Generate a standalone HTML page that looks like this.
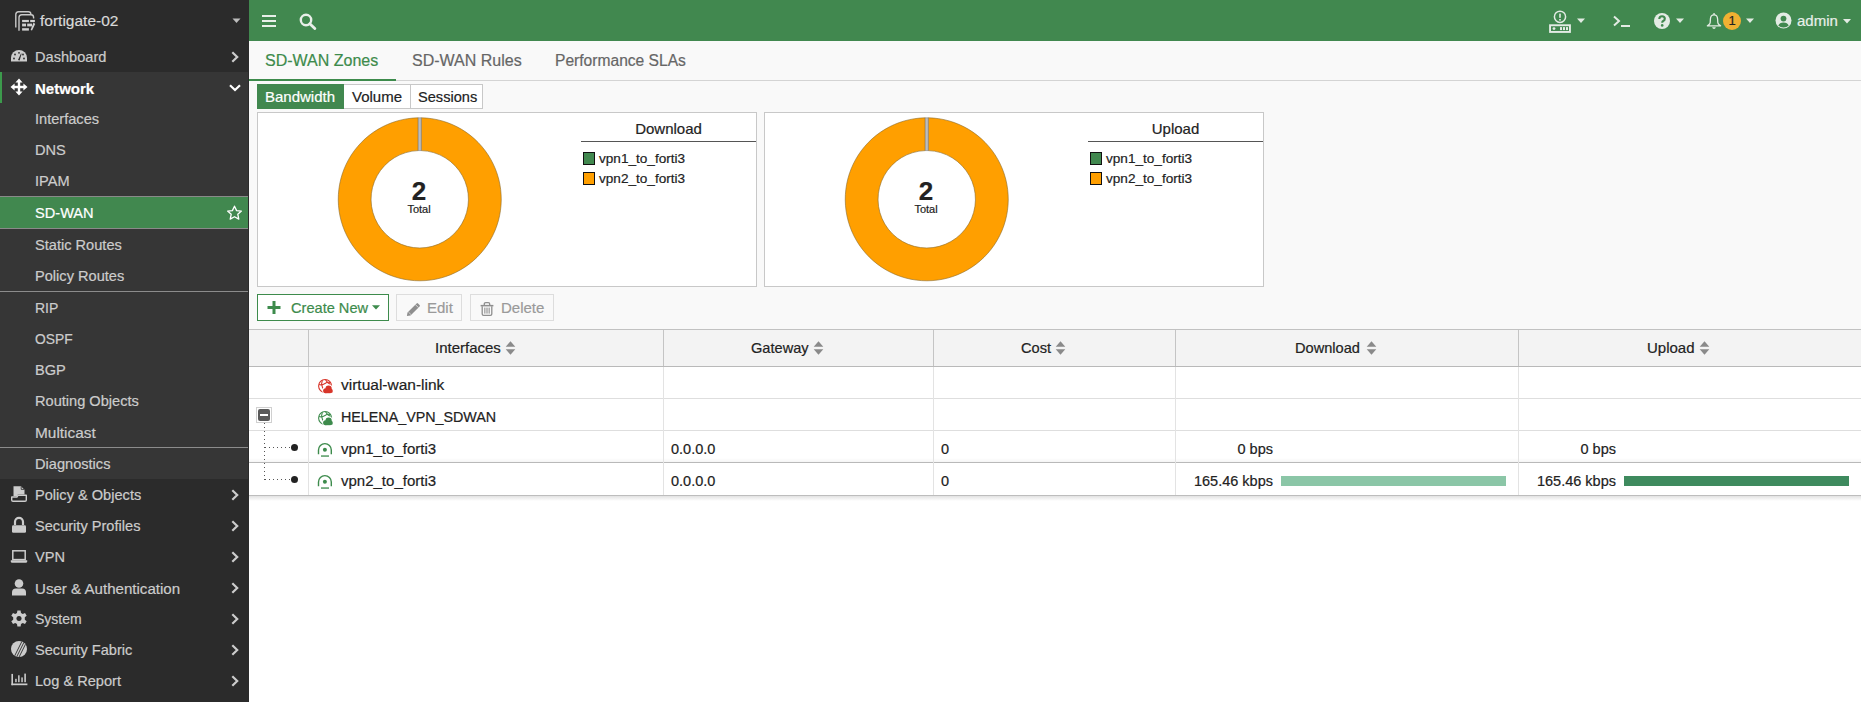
<!DOCTYPE html>
<html><head><meta charset="utf-8">
<style>
*{box-sizing:border-box;margin:0;padding:0}
html,body{width:1861px;height:702px;overflow:hidden;background:#fff;font-family:"Liberation Sans",sans-serif;-webkit-font-smoothing:antialiased;}
.t,.si .l{-webkit-text-stroke:0.2px currentColor}
.a{position:absolute}
.t{position:absolute;white-space:nowrap;}
#side{position:absolute;left:0;top:0;width:249px;height:702px;background:#2b2b2b;overflow:hidden}
.si{position:absolute;left:0;width:248px;height:31px;color:#cccccc;font-size:14.6px;}
.si .l{position:absolute;left:35px;top:1px;line-height:31px;white-space:nowrap}
.si svg.ic{position:absolute;left:10px;top:6px}
.si svg.ch{position:absolute;left:231px;top:10px}
#hdr{position:absolute;left:249px;top:0;width:1612px;height:41px;background:#41884f;}
</style></head>
<body>
<div id="side">
  <div class="a" style="left:0;top:72px;width:248px;height:407px;background:#363636"></div>
  <div class="a" style="left:0;top:72px;width:2px;height:31px;background:#3c9a4c"></div>
  <!-- separators -->
  <div class="a" style="left:0;top:291px;width:248px;height:1px;background:#8c8c8c"></div>
  <div class="a" style="left:0;top:447px;width:248px;height:1px;background:#8c8c8c"></div>
  <!-- SD-WAN selected -->
  <div class="a" style="left:0;top:196px;width:248px;height:33px;background:#41884f;border-top:1px solid #8a8a8a;border-bottom:1px solid #8a8a8a"></div>

  <!-- top device -->
  <svg class="a" style="left:14px;top:10px" width="22" height="22" viewBox="0 0 22 22">
    <g fill="none" stroke="#c8c8c8" stroke-width="1.4">
      <path d="M1.8 17.5 V4.6 Q1.8 1.8 4.6 1.8 H14.4 Q16.8 1.8 16.9 4.3"/>
      <path d="M5 20.8 V7.6 Q5 4.8 7.8 4.8 H17 Q19.6 4.8 19.6 7.5 V8.6"/>
    </g>
    <g fill="#d0d0d0">
      <rect x="8.1" y="9.9" width="6.8" height="2.2"/><rect x="16.2" y="9.9" width="4.7" height="2.2"/>
      <rect x="8.1" y="13.6" width="3.9" height="2.8"/><rect x="13.2" y="13.6" width="4.8" height="2.8"/>
      <rect x="8.1" y="18.2" width="6.8" height="2.4"/>
      <path d="M19.5 12.6 L21.2 14 L18 20.6 L16.6 20 Z"/>
    </g>
  </svg>
  <div class="t" style="left:40px;top:11px;font-size:15.5px;color:#d9d9d9;line-height:20px">fortigate-02</div>
  <svg class="a" style="left:232px;top:18px" width="9" height="6" viewBox="0 0 9 6"><path d="M0.5 0.5 H8.5 L4.5 5 Z" fill="#bdbdbd"/></svg>

  <!-- Dashboard -->
  <div class="si" style="top:41px">
    <svg class="ic" style="left:10px;top:8px" width="18" height="14" viewBox="0 0 18 14"><path d="M9 1 A8 8 0 0 0 1 9 V12.5 H17 V9 A8 8 0 0 0 9 1 Z" fill="#cccccc"/><g fill="#2b2b2b"><circle cx="4" cy="9.5" r="0.9"/><circle cx="5" cy="5.5" r="0.9"/><circle cx="9" cy="3.8" r="0.9"/><circle cx="14" cy="9.5" r="0.9"/><circle cx="13" cy="5.5" r="0.9"/><path d="M8 11 L11 4.5 L11.6 4.8 L9.6 11.5 Z"/></g></svg>
    <span class="l">Dashboard</span>
    <svg class="ch" width="8" height="12" viewBox="0 0 8 12"><path d="M1.3 1.3 L6.2 6 L1.3 10.7" fill="none" stroke="#cccccc" stroke-width="2.2"/></svg>
  </div>
  <!-- Network -->
  <div class="si" style="top:72px;color:#fff;font-weight:bold;font-size:15px">
    <svg class="ic" style="left:10px;top:6px" width="18" height="18" viewBox="0 0 18 18"><path fill="#fff" d="M9 0.5 L12.6 4.6 H10.2 V7.8 H13.4 V5.4 L17.5 9 L13.4 12.6 V10.2 H10.2 V13.4 H12.6 L9 17.5 L5.4 13.4 H7.8 V10.2 H4.6 V12.6 L0.5 9 L4.6 5.4 V7.8 H7.8 V4.6 H5.4 Z"/></svg>
    <span class="l">Network</span>
    <svg class="a" style="left:229px;top:12px" width="12" height="8" viewBox="0 0 12 8"><path d="M1 1.2 L6 6 L11 1.2" fill="none" stroke="#ffffff" stroke-width="2.2"/></svg>
  </div>
  <div class="si" style="top:103px"><span class="l">Interfaces</span></div>
  <div class="si" style="top:134px"><span class="l">DNS</span></div>
  <div class="si" style="top:165px"><span class="l">IPAM</span></div>
  <div class="si" style="top:197px;color:#fff"><span class="l">SD-WAN</span>
    <svg class="a" style="left:226px;top:8px" width="17" height="16" viewBox="0 0 17 16"><path d="M8.5 1.2 L10.6 5.6 L15.4 6.1 L11.8 9.3 L12.8 14.1 L8.5 11.7 L4.2 14.1 L5.2 9.3 L1.6 6.1 L6.4 5.6 Z" fill="none" stroke="#fff" stroke-width="1.3" stroke-linejoin="round"/></svg>
  </div>
  <div class="si" style="top:229px"><span class="l">Static Routes</span></div>
  <div class="si" style="top:260px"><span class="l">Policy Routes</span></div>
  <div class="si" style="top:292px"><span class="l" style="font-size:14px">RIP</span></div>
  <div class="si" style="top:323px"><span class="l" style="font-size:13.8px">OSPF</span></div>
  <div class="si" style="top:354px"><span class="l">BGP</span></div>
  <div class="si" style="top:385px"><span class="l">Routing Objects</span></div>
  <div class="si" style="top:416px"><span class="l" style="font-size:15.4px">Multicast</span></div>
  <div class="si" style="top:448px"><span class="l">Diagnostics</span></div>

  <div class="si" style="top:479px">
    <svg class="ic" style="left:10px;top:6px" width="18" height="18" viewBox="0 0 18 18"><path d="M3.5 1.2 H11 L14.5 4.7 V9.4 H7.9 L6.7 11.3 H3.5 Z" fill="#cccccc"/><path d="M11.2 1.6 V4.4 H14" fill="none" stroke="#2b2b2b" stroke-width="0.8"/><path d="M1.7 12 H6.9 L8.1 10.2 H16.3 V15 Q16.3 16.3 15 16.3 H3 Q1.7 16.3 1.7 15 Z" fill="none" stroke="#cccccc" stroke-width="1.4" stroke-linejoin="round"/></svg>
    <span class="l">Policy &amp; Objects</span>
    <svg class="ch" width="8" height="12" viewBox="0 0 8 12"><path d="M1.3 1.3 L6.2 6 L1.3 10.7" fill="none" stroke="#cccccc" stroke-width="2.2"/></svg>
  </div>
  <div class="si" style="top:510px">
    <svg class="ic" style="left:11px;top:6px" width="16" height="17" viewBox="0 0 16 17"><path d="M4 9 V5.8 A4 4 0 0 1 12 5.8 V9" fill="none" stroke="#cccccc" stroke-width="2.2"/><rect x="1" y="9.2" width="14" height="7.6" rx="1.3" fill="#cccccc"/></svg>
    <span class="l">Security Profiles</span>
    <svg class="ch" width="8" height="12" viewBox="0 0 8 12"><path d="M1.3 1.3 L6.2 6 L1.3 10.7" fill="none" stroke="#cccccc" stroke-width="2.2"/></svg>
  </div>
  <div class="si" style="top:541px">
    <svg class="ic" style="left:10px;top:8px" width="18" height="15" viewBox="0 0 18 15"><rect x="2.8" y="1.8" width="12.4" height="8.8" fill="none" stroke="#cccccc" stroke-width="1.5"/><path d="M0.8 11.2 H17.2 V12.5 Q17.2 13.8 15.8 13.8 H2.2 Q0.8 13.8 0.8 12.5 Z" fill="#cccccc"/></svg>
    <span class="l">VPN</span>
    <svg class="ch" width="8" height="12" viewBox="0 0 8 12"><path d="M1.3 1.3 L6.2 6 L1.3 10.7" fill="none" stroke="#cccccc" stroke-width="2.2"/></svg>
  </div>
  <div class="si" style="top:572px">
    <svg class="ic" style="left:11px;top:7px" width="16" height="17" viewBox="0 0 16 17"><circle cx="8" cy="4.5" r="4.3" fill="#cccccc"/><path d="M1 16.5 V13.5 Q1 9.5 5 9.5 H11 Q15 9.5 15 13.5 V16.5 Z" fill="#cccccc"/></svg>
    <span class="l" style="font-size:15.1px">User &amp; Authentication</span>
    <svg class="ch" width="8" height="12" viewBox="0 0 8 12"><path d="M1.3 1.3 L6.2 6 L1.3 10.7" fill="none" stroke="#cccccc" stroke-width="2.2"/></svg>
  </div>
  <div class="si" style="top:603px">
    <svg class="ic" style="left:11px;top:7px" width="16" height="17" viewBox="0 0 16 17"><g transform="translate(8 8.5)"><path fill="#cccccc" fill-rule="evenodd" d="M-1.6 -8 H1.6 L2 -5.6 L3.8 -4.6 L6 -5.6 L7.7 -2.8 L5.8 -1.2 V1.2 L7.7 2.8 L6 5.6 L3.8 4.6 L2 5.6 L1.6 8 H-1.6 L-2 5.6 L-3.8 4.6 L-6 5.6 L-7.7 2.8 L-5.8 1.2 V-1.2 L-7.7 -2.8 L-6 -5.6 L-3.8 -4.6 L-2 -5.6 Z M0 -2.6 A2.6 2.6 0 1 0 0.01 -2.6 Z"/></g></svg>
    <span class="l" style="font-size:14px">System</span>
    <svg class="ch" width="8" height="12" viewBox="0 0 8 12"><path d="M1.3 1.3 L6.2 6 L1.3 10.7" fill="none" stroke="#cccccc" stroke-width="2.2"/></svg>
  </div>
  <div class="si" style="top:634px">
    <svg class="ic" style="left:10px;top:6px" width="18" height="18" viewBox="0 0 18 18"><defs><clipPath id="cp"><circle cx="9" cy="9" r="8"/></clipPath></defs><circle cx="9" cy="9" r="8" fill="#cccccc"/><g clip-path="url(#cp)" stroke="#2b2b2b" stroke-width="0.9"><path d="M3.6 18 L12.6 0"/><path d="M6.1 18 L15.1 0"/><path d="M8.6 18 L17.6 0"/></g></svg>
    <span class="l">Security Fabric</span>
    <svg class="ch" width="8" height="12" viewBox="0 0 8 12"><path d="M1.3 1.3 L6.2 6 L1.3 10.7" fill="none" stroke="#cccccc" stroke-width="2.2"/></svg>
  </div>
  <div class="si" style="top:665px">
    <svg class="ic" style="left:10px;top:7px" width="18" height="17" viewBox="0 0 18 17"><g fill="#cccccc"><rect x="1.4" y="1.9" width="1.6" height="11.3"/><rect x="1.4" y="11.5" width="16" height="1.7"/><rect x="5.2" y="6.8" width="1.5" height="3.4"/><rect x="8.1" y="3.3" width="1.5" height="6.9"/><rect x="11.3" y="5.4" width="1.5" height="4.8"/><rect x="14.3" y="1.6" width="1.6" height="8.6"/></g></svg>
    <span class="l">Log &amp; Report</span>
    <svg class="ch" width="8" height="12" viewBox="0 0 8 12"><path d="M1.3 1.3 L6.2 6 L1.3 10.7" fill="none" stroke="#cccccc" stroke-width="2.2"/></svg>
  </div>
</div>

<div id="hdr"></div>

<!-- header icons -->
<svg class="a" style="left:261px;top:14px" width="16" height="13" viewBox="0 0 16 13"><g fill="#e8efe9"><rect x="1" y="1" width="14" height="2"/><rect x="1" y="6" width="14" height="2"/><rect x="1" y="11" width="14" height="2"/></g></svg>
<svg class="a" style="left:299px;top:13px" width="18" height="17" viewBox="0 0 18 17"><circle cx="7" cy="7" r="5.2" fill="none" stroke="#e8efe9" stroke-width="2.4"/><path d="M10.8 10.8 L15.8 15.6" stroke="#e8efe9" stroke-width="2.8" stroke-linecap="round"/></svg>

<svg class="a" style="left:1548px;top:10px" width="25" height="24" viewBox="0 0 25 24"><g fill="none" stroke="#e3ebe4" stroke-width="1.5"><circle cx="12" cy="6.8" r="5.6"/><rect x="2.05" y="15.25" width="19.9" height="6.7" stroke-width="1.9"/></g><g fill="#e3ebe4"><rect x="11.2" y="3.6" width="1.6" height="4.2"/><rect x="11.2" y="9" width="1.6" height="1.6"/><circle cx="6" cy="18.6" r="1.4"/><rect x="12" y="17.1" width="2" height="3"/><rect x="15" y="17.1" width="2" height="3"/><rect x="18" y="17.1" width="2" height="3"/></g></svg>
<svg class="a" style="left:1577px;top:18px" width="8" height="6" viewBox="0 0 8 6"><path d="M0 0.5 H8 L4 5 Z" fill="#e3ebe4"/></svg>
<svg class="a" style="left:1613px;top:15px" width="18" height="13" viewBox="0 0 18 13"><path d="M1 1.5 L6 6 L1 10.5" fill="none" stroke="#e3ebe4" stroke-width="2"/><rect x="8" y="10" width="9" height="2" fill="#e3ebe4"/></svg>
<svg class="a" style="left:1653px;top:12px" width="18" height="18" viewBox="0 0 18 18"><circle cx="9" cy="9" r="8" fill="#e3ebe4"/><path d="M6.3 7 Q6.3 4.2 9 4.2 Q11.8 4.2 11.8 6.8 Q11.8 8.3 10.2 9 Q9.2 9.5 9.2 10.8" fill="none" stroke="#41884f" stroke-width="2.1"/><circle cx="9.2" cy="13.4" r="1.3" fill="#41884f"/></svg>
<svg class="a" style="left:1676px;top:18px" width="8" height="6" viewBox="0 0 8 6"><path d="M0 0.5 H8 L4 5 Z" fill="#e3ebe4"/></svg>
<svg class="a" style="left:1706px;top:12px" width="16" height="18" viewBox="0 0 16 18"><rect x="7.3" y="1.1" width="1.5" height="1.8" fill="#e3ebe4"/><path d="M8 2.9 Q4.6 2.9 4.4 7 L4.2 10.5 Q4.1 12 2.4 13.1 L1.4 13.8 H14.6 L13.6 13.1 Q11.9 12 11.8 10.5 L11.6 7 Q11.4 2.9 8 2.9 Z" fill="none" stroke="#e3ebe4" stroke-width="1.3" stroke-linejoin="round"/><path d="M6.1 15.3 H9.9 Q9.4 16.9 8 16.9 Q6.6 16.9 6.1 15.3 Z" fill="#e3ebe4"/></svg>
<div class="a" style="left:1723px;top:12px;width:18px;height:18px;border-radius:50%;background:#f0b132"></div>
<div class="t" style="left:1723px;top:12px;width:18px;line-height:18px;text-align:center;font-size:13px;color:#222">1</div>
<svg class="a" style="left:1746px;top:18px" width="8" height="6" viewBox="0 0 8 6"><path d="M0 0.5 H8 L4 5 Z" fill="#e3ebe4"/></svg>
<svg class="a" style="left:1775px;top:12px" width="17" height="17" viewBox="0 0 17 17"><circle cx="8.5" cy="8.5" r="8" fill="#e3ebe4"/><circle cx="8.5" cy="6.6" r="2.9" fill="#41884f"/><path d="M3.3 13.6 Q4.5 10.6 8.5 10.6 Q12.5 10.6 13.7 13.6 Q11.8 15.6 8.5 15.6 Q5.2 15.6 3.3 13.6 Z" fill="#41884f"/></svg>
<div class="t" style="left:1797px;top:11px;font-size:15px;line-height:20px;color:#e8efe9">admin</div>
<svg class="a" style="left:1843px;top:19px" width="8" height="5" viewBox="0 0 8 5"><path d="M0 0 H8 L4 4.5 Z" fill="#e3ebe4"/></svg>

<!-- content bg -->
<div class="a" style="left:249px;top:41px;width:1612px;height:288px;background:#f9f9f9"></div>
<!-- tabs -->
<div class="a" style="left:249px;top:80px;width:1612px;height:1px;background:#d4d4d4"></div>
<div class="a" style="left:249px;top:79px;width:147px;height:2px;background:#3d8b4c"></div>
<div class="t" style="left:265px;top:51px;font-size:16px;line-height:20px;color:#3d8b4c">SD-WAN Zones</div>
<div class="t" style="left:412px;top:51px;font-size:16px;line-height:20px;color:#666">SD-WAN Rules</div>
<div class="t" style="left:555px;top:51px;font-size:15.6px;line-height:20px;color:#666">Performance SLAs</div>

<!-- segmented buttons -->
<div class="a" style="left:257px;top:84px;width:226px;height:25px;background:#fff;border:1px solid #c8c8c8"></div>
<div class="a" style="left:257px;top:84px;width:87px;height:25px;background:#41884f"></div>
<div class="a" style="left:410px;top:84px;width:1px;height:25px;background:#c8c8c8"></div>
<div class="t" style="left:265px;top:87px;font-size:15px;line-height:20px;color:#fff">Bandwidth</div>
<div class="t" style="left:352px;top:87px;font-size:15px;line-height:20px;color:#222">Volume</div>
<div class="t" style="left:418px;top:87px;font-size:14.6px;line-height:20px;color:#222">Sessions</div>

<!-- chart panels -->
<div class="a" style="left:257px;top:112px;width:500px;height:175px;background:#fff;border:1px solid #c8c8c8"></div>
<div class="a" style="left:764px;top:112px;width:500px;height:175px;background:#fff;border:1px solid #c8c8c8"></div>

<svg class="a" style="left:257px;top:112px" width="500" height="175" viewBox="0 0 500 175">
  <g transform="translate(162.75 87.3)">
    <path d="M1.5 -81.5 A81.5 81.5 0 1 1 -1.5 -81.5 L-1.5 -48.7 A48.7 48.7 0 1 0 1.5 -48.7 Z" fill="#ff9f00" stroke="#8a6a2a" stroke-width="0.6"/>
    <path d="M-1.5 -81.5 L1.5 -81.5 L1.5 -48.7 L-1.5 -48.7 Z" fill="#bdbdbd" stroke="#777" stroke-width="0.5"/>
  </g>
</svg>
<svg class="a" style="left:764px;top:112px" width="500" height="175" viewBox="0 0 500 175">
  <g transform="translate(162.75 87.3)">
    <path d="M1.5 -81.5 A81.5 81.5 0 1 1 -1.5 -81.5 L-1.5 -48.7 A48.7 48.7 0 1 0 1.5 -48.7 Z" fill="#ff9f00" stroke="#8a6a2a" stroke-width="0.6"/>
    <path d="M-1.5 -81.5 L1.5 -81.5 L1.5 -48.7 L-1.5 -48.7 Z" fill="#bdbdbd" stroke="#777" stroke-width="0.5"/>
  </g>
</svg>
<div class="t" style="left:369px;top:176px;width:100px;text-align:center;font-size:26px;font-weight:bold;line-height:30px;color:#222">2</div>
<div class="t" style="left:369px;top:203px;width:100px;text-align:center;font-size:11px;line-height:13px;color:#222">Total</div>
<div class="t" style="left:876px;top:176px;width:100px;text-align:center;font-size:26px;font-weight:bold;line-height:30px;color:#222">2</div>
<div class="t" style="left:876px;top:203px;width:100px;text-align:center;font-size:11px;line-height:13px;color:#222">Total</div>

<!-- legends -->
<div class="t" style="left:581px;top:119px;width:175px;text-align:center;font-size:15px;line-height:20px;color:#222">Download</div>
<div class="a" style="left:581px;top:141px;width:175px;height:1px;background:#555"></div>
<div class="a" style="left:583px;top:152px;width:12px;height:13px;background:#41884f;border:1px solid #111"></div>
<div class="a" style="left:583px;top:172px;width:12px;height:13px;background:#ff9f00;border:1px solid #111"></div>
<div class="t" style="left:599px;top:150px;font-size:13.6px;line-height:18px;color:#222">vpn1_to_forti3</div>
<div class="t" style="left:599px;top:170px;font-size:13.6px;line-height:18px;color:#222">vpn2_to_forti3</div>

<div class="t" style="left:1088px;top:119px;width:175px;text-align:center;font-size:15px;line-height:20px;color:#222">Upload</div>
<div class="a" style="left:1088px;top:141px;width:175px;height:1px;background:#555"></div>
<div class="a" style="left:1090px;top:152px;width:12px;height:13px;background:#41884f;border:1px solid #111"></div>
<div class="a" style="left:1090px;top:172px;width:12px;height:13px;background:#ff9f00;border:1px solid #111"></div>
<div class="t" style="left:1106px;top:150px;font-size:13.6px;line-height:18px;color:#222">vpn1_to_forti3</div>
<div class="t" style="left:1106px;top:170px;font-size:13.6px;line-height:18px;color:#222">vpn2_to_forti3</div>

<!-- toolbar -->
<div class="a" style="left:257px;top:294px;width:132px;height:27px;background:#fff;border:1px solid #3d8b4c"></div>
<svg class="a" style="left:267px;top:301px" width="14" height="13" viewBox="0 0 14 13"><path d="M5.5 0 H8.5 V5 H13.5 V8 H8.5 V13 H5.5 V8 H0.5 V5 H5.5 Z" fill="#3d8b4c"/></svg>
<div class="t" style="left:291px;top:298px;font-size:14.6px;line-height:20px;color:#3d8b4c">Create New</div>
<svg class="a" style="left:372px;top:305px" width="8" height="5" viewBox="0 0 8 5"><path d="M0 0.3 H8 L4 4.5 Z" fill="#3d8b4c"/></svg>

<div class="a" style="left:396px;top:294px;width:66px;height:27px;background:#f9f9f9;border:1px solid #dddddd"></div>
<svg class="a" style="left:406px;top:302px" width="15" height="15" viewBox="0 0 15 15"><path d="M0.9 14.1 L1.5 10.5 L10.6 1.4 Q11.3 0.7 12 1.4 L13.6 3 Q14.3 3.7 13.6 4.4 L4.5 13.5 Z" fill="#8e8e8e"/><path d="M9.4 2.6 L12.4 5.6" stroke="#f9f9f9" stroke-width="0.7"/><path d="M2.4 10 L5 12.6" stroke="#f9f9f9" stroke-width="0.6"/></svg>
<div class="t" style="left:427px;top:298px;font-size:15px;line-height:20px;color:#9a9a9a">Edit</div>

<div class="a" style="left:470px;top:294px;width:84px;height:27px;background:#f9f9f9;border:1px solid #dddddd"></div>
<svg class="a" style="left:480px;top:301px" width="14" height="16" viewBox="0 0 14 16"><g fill="none" stroke="#8e8e8e" stroke-width="1.3"><path d="M4.3 4 V3 Q4.3 1.7 5.7 1.7 H8.3 Q9.7 1.7 9.7 3 V4"/><path d="M2.2 5.2 V12.9 Q2.2 14.3 3.6 14.3 H10.4 Q11.8 14.3 11.8 12.9 V5.2"/></g><rect x="0.6" y="3.9" width="12.8" height="1.5" fill="#8e8e8e"/><g fill="#8e8e8e"><rect x="4.3" y="6.6" width="1.1" height="6"/><rect x="6.45" y="6.6" width="1.1" height="6"/><rect x="8.6" y="6.6" width="1.1" height="6"/></g></svg>
<div class="t" style="left:501px;top:298px;font-size:15px;line-height:20px;color:#9a9a9a">Delete</div>

<!-- table -->
<div class="a" style="left:249px;top:329px;width:1612px;height:38px;background:#f3f3f3;border-top:1px solid #c2c2c2;border-bottom:1px solid #b9b9b9"></div>
<div class="a" style="left:249px;top:367px;width:1612px;height:128px;background:#fff"></div>
<div class="a" style="left:249px;top:398px;width:1612px;height:1px;background:#dedede"></div>
<div class="a" style="left:249px;top:430px;width:1612px;height:1px;background:#dedede"></div>
<div class="a" style="left:249px;top:462px;width:1612px;height:1px;background:#b9b9b9"></div>
<div class="a" style="left:249px;top:495px;width:1612px;height:1px;background:#bdbdbd"></div>
<div class="a" style="left:249px;top:496px;width:1612px;height:5px;background:linear-gradient(#e2e2e2,#fff)"></div>
<div class="a" style="left:249px;top:458px;width:1612px;height:4px;background:linear-gradient(rgba(0,0,0,0),rgba(0,0,0,0.04))"></div>

<!-- column dividers -->
<div class="a" style="left:308px;top:330px;width:1px;height:36px;background:#c4c4c4"></div>
<div class="a" style="left:663px;top:330px;width:1px;height:36px;background:#c4c4c4"></div>
<div class="a" style="left:933px;top:330px;width:1px;height:36px;background:#c4c4c4"></div>
<div class="a" style="left:1175px;top:330px;width:1px;height:36px;background:#c4c4c4"></div>
<div class="a" style="left:1518px;top:330px;width:1px;height:36px;background:#c4c4c4"></div>
<div class="a" style="left:308px;top:367px;width:1px;height:128px;background:#e3e3e3"></div>
<div class="a" style="left:663px;top:367px;width:1px;height:128px;background:#e3e3e3"></div>
<div class="a" style="left:933px;top:367px;width:1px;height:128px;background:#e3e3e3"></div>
<div class="a" style="left:1175px;top:367px;width:1px;height:128px;background:#e3e3e3"></div>
<div class="a" style="left:1518px;top:367px;width:1px;height:128px;background:#e3e3e3"></div>

<!-- header labels -->
<div class="t" style="left:435px;top:338px;font-size:15px;line-height:20px;color:#222">Interfaces</div>
<div class="t" style="left:751px;top:338px;font-size:14.6px;line-height:20px;color:#222">Gateway</div>
<div class="t" style="left:1021px;top:338px;font-size:14.6px;line-height:20px;color:#222">Cost</div>
<div class="t" style="left:1295px;top:338px;font-size:14.6px;line-height:20px;color:#222">Download</div>
<div class="t" style="left:1647px;top:338px;font-size:15px;line-height:20px;color:#222">Upload</div>
<svg class="a" style="left:505px;top:341px" width="11" height="14" viewBox="0 0 11 14"><path d="M5.5 0.3 L10.3 5.7 H0.7 Z M5.5 13.7 L10.3 8.3 H0.7 Z" fill="#8a8a8a"/></svg>
<svg class="a" style="left:813px;top:341px" width="11" height="14" viewBox="0 0 11 14"><path d="M5.5 0.3 L10.3 5.7 H0.7 Z M5.5 13.7 L10.3 8.3 H0.7 Z" fill="#8a8a8a"/></svg>
<svg class="a" style="left:1055px;top:341px" width="11" height="14" viewBox="0 0 11 14"><path d="M5.5 0.3 L10.3 5.7 H0.7 Z M5.5 13.7 L10.3 8.3 H0.7 Z" fill="#8a8a8a"/></svg>
<svg class="a" style="left:1366px;top:341px" width="11" height="14" viewBox="0 0 11 14"><path d="M5.5 0.3 L10.3 5.7 H0.7 Z M5.5 13.7 L10.3 8.3 H0.7 Z" fill="#8a8a8a"/></svg>
<svg class="a" style="left:1699px;top:341px" width="11" height="14" viewBox="0 0 11 14"><path d="M5.5 0.3 L10.3 5.7 H0.7 Z M5.5 13.7 L10.3 8.3 H0.7 Z" fill="#8a8a8a"/></svg>

<!-- tree -->
<div class="a" style="left:256px;top:407px;width:16px;height:16px;border:1px solid #d0d0d0;background:#fff"></div>
<div class="a" style="left:258px;top:409px;width:12px;height:12px;border-radius:2px;background:#5a5a5a"></div>
<div class="a" style="left:260px;top:414px;width:8px;height:2px;background:#fff"></div>
<div class="a" style="left:264px;top:423px;width:1px;height:57px;background:repeating-linear-gradient(180deg,#555 0 1.5px,transparent 1.5px 4px)"></div>
<div class="a" style="left:265px;top:447px;width:27px;height:1px;background:repeating-linear-gradient(90deg,#555 0 1.5px,transparent 1.5px 4px)"></div>
<div class="a" style="left:265px;top:479px;width:27px;height:1px;background:repeating-linear-gradient(90deg,#555 0 1.5px,transparent 1.5px 4px)"></div>
<div class="a" style="left:291px;top:444px;width:7px;height:7px;border-radius:50%;background:#222"></div>
<div class="a" style="left:291px;top:476px;width:7px;height:7px;border-radius:50%;background:#222"></div>

<!-- row icons -->
<svg class="a" style="left:317px;top:378px" width="16" height="16" viewBox="0 0 16 16"><g fill="none" stroke="#d8352a" stroke-width="1.1"><circle cx="8.1" cy="8" r="6.5"/><path d="M5.3 2.2 Q3.8 6 5.5 9.5 Q6.3 11.5 8 13.5"/><path d="M2 6.5 Q5 7.5 8 5.5 Q10.5 3.8 13 4.5"/><path d="M8.5 1.8 Q9.8 4.5 13.5 6.5"/></g><g fill="#fff"><circle cx="8.6" cy="12.6" r="3.5"/><circle cx="11.6" cy="10.6" r="4.1"/><circle cx="13.6" cy="12.8" r="3.2"/><rect x="8.6" y="12" width="5" height="4.2"/></g><g fill="#d8352a"><circle cx="8.6" cy="12.7" r="2.5"/><circle cx="11.6" cy="10.7" r="3.1"/><circle cx="13.6" cy="12.9" r="2.2"/><rect x="8.6" y="12" width="5" height="3.2"/></g></svg>
<svg class="a" style="left:317px;top:410px" width="16" height="16" viewBox="0 0 16 16"><g fill="none" stroke="#3d8b4c" stroke-width="1.1"><circle cx="8.1" cy="8" r="6.5"/><path d="M5.3 2.2 Q3.8 6 5.5 9.5 Q6.3 11.5 8 13.5"/><path d="M2 6.5 Q5 7.5 8 5.5 Q10.5 3.8 13 4.5"/><path d="M8.5 1.8 Q9.8 4.5 13.5 6.5"/></g><g fill="#fff"><circle cx="8.6" cy="12.6" r="3.5"/><circle cx="11.6" cy="10.6" r="4.1"/><circle cx="13.6" cy="12.8" r="3.2"/><rect x="8.6" y="12" width="5" height="4.2"/></g><g fill="#3d8b4c"><circle cx="8.6" cy="12.7" r="2.5"/><circle cx="11.6" cy="10.7" r="3.1"/><circle cx="13.6" cy="12.9" r="2.2"/><rect x="8.6" y="12" width="5" height="3.2"/></g></svg>
<svg class="a" style="left:317px;top:442px" width="16" height="16" viewBox="0 0 16 16"><path d="M1.5 12.3 V8 A6.4 6.4 0 0 1 14.3 8 V12.3" fill="none" stroke="#3d8b4c" stroke-width="1.4"/><circle cx="7.9" cy="7.7" r="2" fill="#3d8b4c"/><rect x="4" y="13.4" width="8" height="1.3" fill="#3d8b4c"/></svg>
<svg class="a" style="left:317px;top:474px" width="16" height="16" viewBox="0 0 16 16"><path d="M1.5 12.3 V8 A6.4 6.4 0 0 1 14.3 8 V12.3" fill="none" stroke="#3d8b4c" stroke-width="1.4"/><circle cx="7.9" cy="7.7" r="2" fill="#3d8b4c"/><rect x="4" y="13.4" width="8" height="1.3" fill="#3d8b4c"/></svg>
<!-- row texts -->
<div class="t" style="left:341px;top:374px;font-size:15.5px;line-height:22px;color:#222">virtual-wan-link</div>
<div class="t" style="left:341px;top:406px;font-size:14.3px;line-height:22px;color:#222">HELENA_VPN_SDWAN</div>
<div class="t" style="left:341px;top:438px;font-size:15px;line-height:22px;color:#222">vpn1_to_forti3</div>
<div class="t" style="left:341px;top:470px;font-size:15px;line-height:22px;color:#222">vpn2_to_forti3</div>
<div class="t" style="left:671px;top:438px;font-size:14.5px;line-height:22px;color:#222">0.0.0.0</div>
<div class="t" style="left:671px;top:470px;font-size:14.5px;line-height:22px;color:#222">0.0.0.0</div>
<div class="t" style="left:941px;top:438px;font-size:14.5px;line-height:22px;color:#222">0</div>
<div class="t" style="left:941px;top:470px;font-size:14.5px;line-height:22px;color:#222">0</div>
<div class="t" style="left:1073px;top:438px;width:200px;text-align:right;font-size:14.5px;line-height:22px;color:#222">0 bps</div>
<div class="t" style="left:1073px;top:470px;width:200px;text-align:right;font-size:14.5px;line-height:22px;color:#222">165.46 kbps</div>
<div class="t" style="left:1416px;top:438px;width:200px;text-align:right;font-size:14.5px;line-height:22px;color:#222">0 bps</div>
<div class="t" style="left:1416px;top:470px;width:200px;text-align:right;font-size:14.5px;line-height:22px;color:#222">165.46 kbps</div>
<div class="a" style="left:1281px;top:476px;width:225px;height:10px;background:#8bc6a7"></div>
<div class="a" style="left:1624px;top:476px;width:225px;height:10px;background:#3e8a5e"></div>
</body></html>
